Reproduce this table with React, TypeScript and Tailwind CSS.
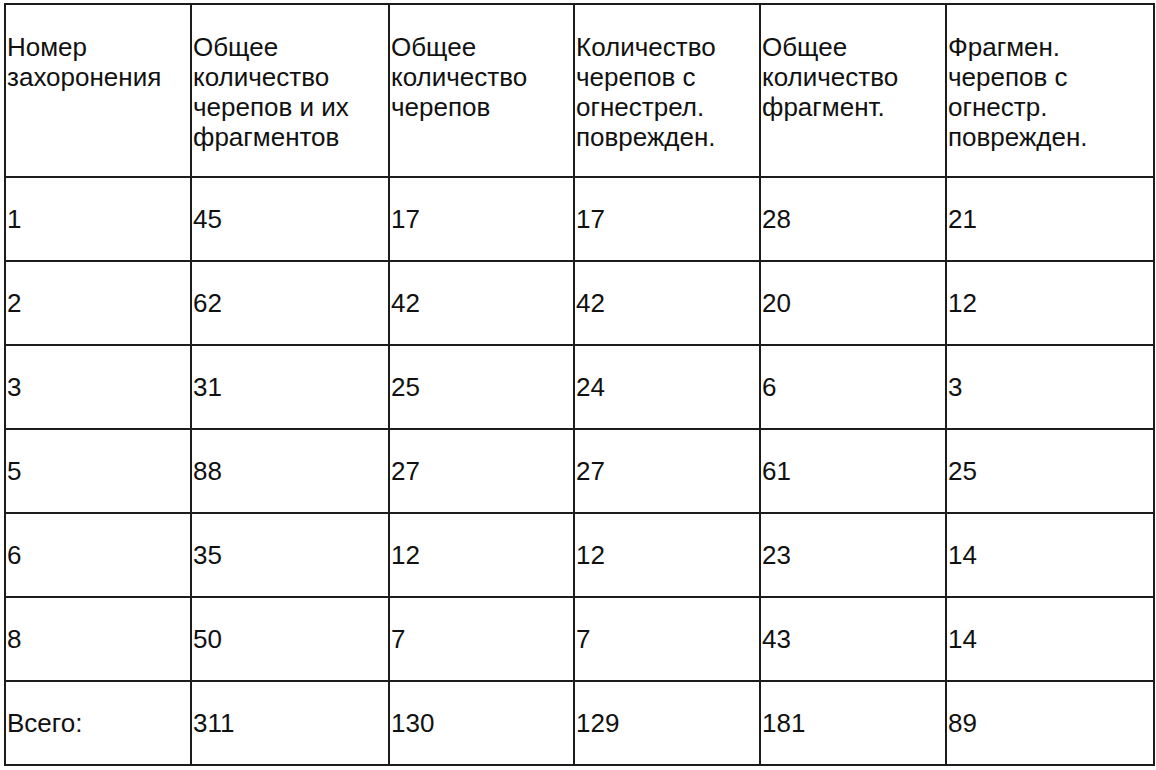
const cols = ["w-[186px]", "w-[198px]", "w-[185px]", "w-[186px]", "w-[186px]", "w-[208px]"];

const header = [
  ["Номер", "захоронения"],
  ["Общее", "количество", "черепов и их", "фрагментов"],
  ["Общее", "количество", "черепов"],
  ["Количество", "черепов с", "огнестрел.", "поврежден."],
  ["Общее", "количество", "фрагмент."],
  ["Фрагмен.", "черепов с", "огнестр.", "поврежден."],
];

const rows = [
  ["1", "45", "17", "17", "28", "21"],
  ["2", "62", "42", "42", "20", "12"],
  ["3", "31", "25", "24", "6", "3"],
  ["5", "88", "27", "27", "61", "25"],
  ["6", "35", "12", "12", "23", "14"],
  ["8", "50", "7", "7", "43", "14"],
  ["Всего:", "311", "130", "129", "181", "89"],
];

export default function App() {
  return (
    <div className="min-h-[770px] w-[1156px] bg-white pl-[4px] pt-[3px] font-['Liberation_Sans',Arial,sans-serif] text-[26px] leading-[30px] text-[#111]">
      <div className="inline-flex flex-col border-l-2 border-t-2 border-[#1c1c1c]">
        <div className="flex">
          {header.map((lines, i) => (
            <div key={i} className={`${cols[i]} h-[173px] border-b-2 border-r-2 border-[#1c1c1c] pl-[1px] pt-[27px]`}>
              {lines.map((l) => (
                <div key={l}>{l}</div>
              ))}
            </div>
          ))}
        </div>
        {rows.map((r, ri) => (
          <div key={ri} className="flex">
            {r.map((c, i) => (
              <div key={i} className={`${cols[i]} flex h-[84px] items-center border-b-2 border-r-2 border-[#1c1c1c] pl-[1px]`}>
                {c}
              </div>
            ))}
          </div>
        ))}
      </div>
    </div>
  );
}
